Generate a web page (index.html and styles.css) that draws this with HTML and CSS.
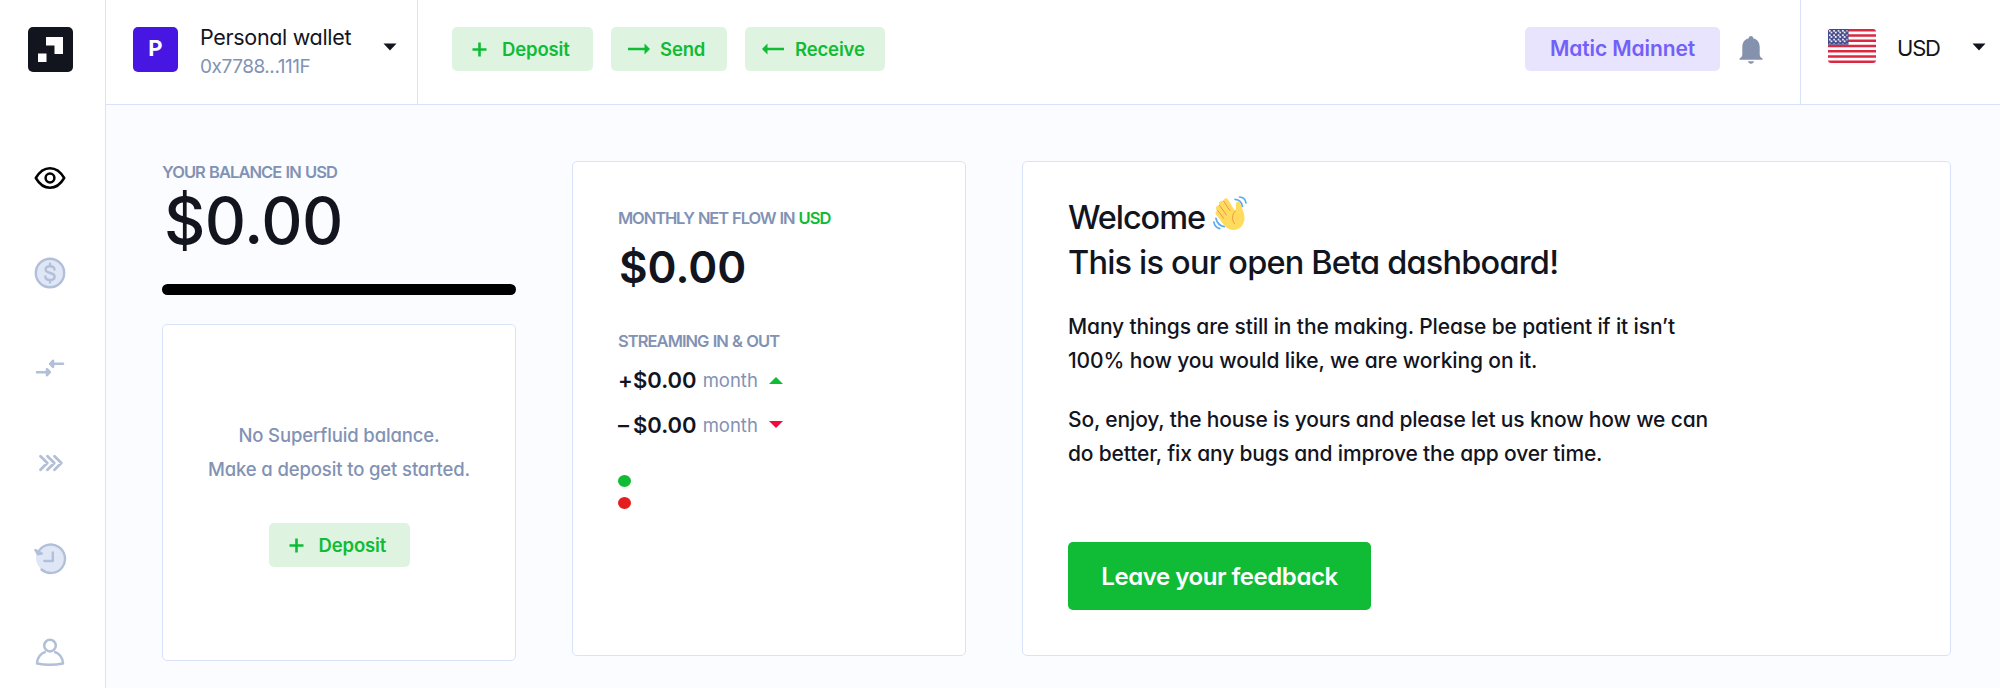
FILE: index.html
```html
<!DOCTYPE html>
<html lang="en">
<head>
    <meta charset="UTF-8">
    <meta name="viewport" content="width=device-width, initial-scale=1.0">
    <title>Dashboard</title>
    <link rel="stylesheet" href="styles.css">
</head>
<body>
    <!-- Sidebar navigation -->
    <nav class="sidebar">
        <a class="logo" href="#">
            <svg width="45" height="45" viewBox="0 0 45 45">
                <rect width="45" height="45" rx="5" fill="#12141e"/>
                <path d="M18 10h17v17h-8.500v-8.500H18zM10 26.500h8.500V35H10z" fill="#fff"/>
            </svg>
        </a>
        <a class="nav-item" href="#">
            <svg width="34" height="34" viewBox="0 0 34 34" fill="none" stroke="#000" stroke-width="2.500">
                <path d="M2.800 17C6 11.500 11 7.200 17 7.200S28 11.500 31.200 17C28 22.500 23 26.800 17 26.800S6 22.500 2.800 17z" stroke-linejoin="round"/>
                <circle cx="17" cy="17" r="4.400"/>
            </svg>
        </a>
        <a class="nav-item" href="#">
            <svg width="34" height="34" viewBox="0 0 34 34" fill="none" stroke="#b2bfd9" stroke-width="2.400">
                <circle cx="17" cy="17" r="14.200" fill="#dfe7f6"/>
                <path d="M21.500 13.500c-.3-2.300-2-3.300-4.500-3.300s-4.400 1.200-4.400 3.300c0 4.700 9 2.300 9 7 0 2.200-2 3.500-4.600 3.500s-4.500-1.300-4.700-3.600M17 7.800v2.400M17 24v2.400" stroke-linecap="round"/>
            </svg>
        </a>
        <a class="nav-item" href="#">
            <svg width="34" height="34" viewBox="0 0 34 34" fill="#b2bfd9" stroke="#b2bfd9" stroke-width="2.600" stroke-linecap="round" stroke-linejoin="round">
                <path d="M4 21.200h10M30 12.800H20"/>
                <path d="M14 18.200l2.800 3-2.800 3zM20 9.800l-2.800 3 2.800 3z"/>
            </svg>
        </a>
        <a class="nav-item" href="#">
            <svg width="34" height="34" viewBox="0 0 34 34" fill="none" stroke="#b2bfd9" stroke-width="2.800" stroke-linecap="round" stroke-linejoin="round">
                <path d="M7.500 10.300l6.800 6.700-6.800 6.700M14.500 10.300l6.800 6.700-6.800 6.700M21.500 10.300l6.800 6.700-6.800 6.700"/>
            </svg>
        </a>
        <a class="nav-item" href="#">
            <svg width="34" height="34" viewBox="0 0 34 34" fill="none" stroke="#b2bfd9" stroke-width="2.400" stroke-linecap="round" stroke-linejoin="round">
                <circle cx="17" cy="17" r="14" fill="#dfe7f6" stroke="none"/>
                <path d="M5.600 10.500A14.200 14.200 0 1 1 8.500 28.500M19.800 11.500v8.500h-8.500"/>
                <path d="M2.400 9l6.400 3.600-4 .6z" fill="#b2bfd9"/>
            </svg>
        </a>
        <a class="nav-item" href="#">
            <svg width="34" height="34" viewBox="0 0 34 34" fill="none" stroke="#b2bfd9" stroke-width="2.500" stroke-linejoin="round">
                <circle cx="17" cy="10.600" r="5.800"/>
                <path d="M12.800 16.800C8 18 4.200 22.500 4 28.500c8 1.500 18 1.500 26 0-.2-6-4-10.500-8.800-11.700"/>
            </svg>
        </a>
    </nav>

    <div class="page">
        <!-- Top bar -->
        <header class="topbar">
            <div class="wallet">
                <div class="avatar">P</div>
                <div class="wallet-info">
                    <div class="wallet-name">Personal wallet</div>
                    <div class="wallet-address">0x7788...111F</div>
                </div>
                <svg class="wallet-caret" width="14" height="8" viewBox="0 0 14 8"><path d="M.5.500h13L7 7.500z" fill="#12141e"/></svg>
            </div>
            <div class="actions">
                <button class="action deposit">
                    <svg width="15" height="15" viewBox="0 0 15 15"><path d="M7.500.500v14M.500 7.500h14" stroke="#10bb35" stroke-width="2.600"/></svg>
                    Deposit
                </button>
                <button class="action send">
                    <svg width="22" height="12" viewBox="0 0 22 12"><path d="M0 6h18" stroke="#10bb35" stroke-width="2.500"/><path d="M16.500.500L22 6l-5.500 5.500z" fill="#10bb35"/></svg>
                    Send
                </button>
                <button class="action receive">
                    <svg width="22" height="12" viewBox="0 0 22 12"><path d="M4 6h18" stroke="#10bb35" stroke-width="2.500"/><path d="M5.500.500L0 6l5.500 5.500z" fill="#10bb35"/></svg>
                    Receive
                </button>
            </div>
            <div class="network">Matic Mainnet</div>
            <svg class="bell" width="24" height="28" viewBox="0 0 24 28" fill="#8492ae">
                <path d="M12 0c1.300 0 2.100.900 2.200 2.200 4.300 1.100 6.500 4.400 6.500 8.800v7.500c0 2 1.200 3.200 2.800 4v1.200H.5v-1.200c1.600-.8 2.800-2 2.800-4V11c0-4.400 2.200-7.700 6.500-8.800C9.900.900 10.700 0 12 0zM9 25.200h6c-.3 1.500-1.400 2.500-3 2.500s-2.700-1-3-2.500z"/>
            </svg>
            <div class="currency">
                <svg width="48" height="34" viewBox="0 0 48 34">
                    <defs>
                        <clipPath id="flag"><rect width="48" height="34" rx="3"/></clipPath>
                        <pattern id="stars" width="4.400" height="4.400" patternUnits="userSpaceOnUse">
                            <circle cx="1.700" cy="1.800" r="1" fill="#fff"/>
                            <circle cx="3.400" cy="3.600" r="1" fill="#fff"/>
                        </pattern>
                    </defs>
                    <g clip-path="url(#flag)">
                        <rect width="48" height="34" fill="#fff"/>
                        <path d="M0 1.300h48M0 6.500h48M0 11.800h48M0 17h48M0 22.200h48M0 27.500h48M0 32.700h48" stroke="#dc2840" stroke-width="2.600"/>
                        <rect width="20.500" height="15.700" fill="#444a8b"/>
                        <rect x="1" y="1" width="18.500" height="13.500" fill="url(#stars)"/>
                    </g>
                </svg>
                <div class="currency-name">USD</div>
                <svg class="currency-caret" width="14" height="8" viewBox="0 0 14 8"><path d="M.5.500h13L7 7.500z" fill="#12141e"/></svg>
            </div>
        </header>

        <main class="content">
            <!-- Balance -->
            <section class="balance">
                <div class="label">YOUR BALANCE IN USD</div>
                <div class="balance-amount">$0.00</div>
                <div class="balance-bar"></div>
                <div class="card empty">
                    <p>No Superfluid balance.<br>Make a deposit to get started.</p>
                    <button class="action deposit">
                        <svg width="15" height="15" viewBox="0 0 15 15"><path d="M7.500.500v14M.500 7.500h14" stroke="#10bb35" stroke-width="2.600"/></svg>
                        Deposit
                    </button>
                </div>
            </section>

            <!-- Net flow -->
            <section class="card flow">
                <div class="label flow-label">MONTHLY NET FLOW IN <span class="flow-currency">USD</span></div>
                <div class="flow-amount">$0.00</div>
                <div class="label stream-label">STREAMING IN &amp; OUT</div>
                <div class="stream">
                    <span class="sign">+</span>
                    <span>$0.00</span>
                    <span class="month">month</span>
                    <svg width="14" height="7" viewBox="0 0 14 7"><path d="M0 7h14L7 0z" fill="#10bb35"/></svg>
                </div>
                <div class="stream">
                    <span class="sign">–</span>
                    <span>$0.00</span>
                    <span class="month">month</span>
                    <svg width="14" height="7" viewBox="0 0 14 7"><path d="M0 0h14L7 7z" fill="#f5093a"/></svg>
                </div>
                <div class="dots">
                    <i class="dot dot-in"></i>
                    <i class="dot dot-out"></i>
                </div>
            </section>

            <!-- Welcome message -->
            <section class="card welcome">
                <h1><span class="greeting">Welcome</span>
                    <svg class="wave" width="34" height="34" viewBox="0 0 34 34" fill="none" stroke-linecap="round">
                        <path d="M13 5l6 10M8.500 7.500l7 11M5.500 12l7 10M5 17l7 9" stroke="#ffdb5e" stroke-width="5"/>
                        <path d="M16 10l6.500 4.500c1.500-3-.5-6.500 1-8.200 1.500-1.500 3.700-.3 4.200 2 .7 3.500 3.800 8 3.800 13.200C31.500 28.500 27 34 20.500 34 15 34 11.500 30 8 25z" fill="#ffdb5e"/>
                        <path d="M10.500 5l6.300 9.500M6.500 9.300l7 9.700M4.300 14l6.500 8.500M22.300 15c-3.200 3.300-3.800 8-1 12.500" stroke="#ee9547" stroke-width="1"/>
                        <path d="M22 3.300c3.800.2 6.800 3 7.500 7.200M26.500 1c3.500.2 6 2.500 6.500 6M2.900 22.300c1.100 4.700 4 7.700 8.400 8.400M.8 26c.7 3.700 2.800 6 5.900 6.700" stroke="#5dadec" stroke-width="1.700"/>
                    </svg>
                    <br>This is our open Beta dashboard!</h1>
                <p>Many things are still in the making. Please be patient if it isn’t<br>100% how you would like, we are working on it.</p>
                <p>So, enjoy, the house is yours and please let us know how we can<br>do better, fix any bugs and improve the app over time.</p>
                <button class="feedback">Leave your feedback</button>
            </section>
        </main>
    </div>
</body>
</html>
```
FILE: styles.css
```css
* {
    box-sizing: border-box;
}

body {
    margin: 0;
    display: flex;
    height: 688px;
    overflow: hidden;
    font-family: Inter, Roboto, sans-serif;
    font-feature-settings: "cv11";
    color: #12141e;
    background-color: #fbfcff;
}

svg {
    display: block;
    flex: none;
}

button {
    border: none;
    font-family: inherit;
    font-feature-settings: inherit;
    cursor: pointer;
}

/* Sidebar */
.sidebar {
    width: 106px;
    flex: none;
    background-color: #fff;
    border-right: 1px solid #d8e2f9;
}

.logo {
    display: block;
    padding: 27px 0 0 28px;
    height: 130.5px;
}

.nav-item {
    display: flex;
    height: 94.9px;
    padding-left: 33px;
    align-items: center;
}

.page {
    flex: 1;
    min-width: 0;
}

/* Top bar */
.topbar {
    display: flex;
    height: 105px;
    background-color: #fff;
    border-bottom: 1px solid #d8e2f9;
}

.wallet {
    display: flex;
    width: 312px;
    padding-left: 27px;
    border-right: 1px solid #d8e2f9;
}

.avatar {
    width: 45px;
    height: 45px;
    margin-top: 27px;
    border-radius: 5px;
    background-color: #4816e2;
    color: #fff;
    font-size: 22px;
    font-weight: 700;
    line-height: 43px;
    text-align: center;
}

.wallet-info {
    width: 205px;
    padding: 23px 0 0 22px;
    line-height: 29px;
}

.wallet-name {
    font-size: 21.5px;
    letter-spacing: -0.32px;
}

.wallet-address {
    font-size: 19px;
    letter-spacing: -0.45px;
    color: #8292b4;
}

.wallet-caret {
    margin-top: 43px;
}

.actions {
    display: flex;
    gap: 18px;
    padding: 27px 0 0 34px;
}

.action {
    display: flex;
    align-items: center;
    height: 44px;
    padding: 0;
    border-radius: 5px;
    background-color: #dff4e0;
    color: #10bb35;
    font-size: 18.5px;
    font-weight: 600;
    letter-spacing: -0.15px;
}

.deposit {
    width: 141px;
    padding-left: 20px;
    gap: 15px;
}

.send {
    width: 116px;
    padding-left: 17px;
    gap: 10px;
}

.receive {
    width: 140px;
    padding-left: 17px;
    gap: 11px;
}

.network {
    width: 195px;
    height: 44px;
    margin: 27px 0 0 auto;
    border-radius: 5px;
    background-color: #e9e4fd;
    color: #7360f7;
    font-size: 21px;
    font-weight: 600;
    letter-spacing: -0.1px;
    line-height: 43px;
    text-align: center;
}

.bell {
    margin: 36px 37px 0 19px;
}

.currency {
    display: flex;
    width: 200px;
    padding: 29px 0 0 27px;
    border-left: 1px solid #d8e2f9;
}

.currency-name {
    width: 96px;
    padding-left: 21px;
    font-size: 22px;
    letter-spacing: -1.2px;
    line-height: 38px;
}

.currency-caret {
    margin-top: 14px;
}

/* Content */
.content {
    display: flex;
    gap: 56px;
    padding: 56px 49px 0 56px;
    align-items: flex-start;
}

.card {
    background-color: #fff;
    border: 1px solid #d8e2f9;
    border-radius: 5px;
}

.label {
    color: #8292b4;
    font-size: 16.5px;
    font-weight: 600;
    letter-spacing: -0.95px;
    line-height: 22px;
    word-spacing: 1px;
}

.balance {
    width: 354px;
}

.balance-amount {
    padding-left: 2px;
    font-size: 64px;
    font-weight: 500;
    letter-spacing: -0.5px;
    line-height: 76px;
}

.balance-bar {
    height: 11px;
    margin: 25px 0 29px;
    border-radius: 6px;
    background-color: #000;
}

.empty {
    display: flex;
    flex-direction: column;
    align-items: center;
    height: 337px;
    padding-top: 94px;
}

.empty p {
    margin: 0 0 37px;
    color: #8292b4;
    font-size: 18.5px;
    font-weight: 500;
    letter-spacing: -0.13px;
    line-height: 33.5px;
    text-align: center;
}

/* Net flow card */
.flow {
    width: 394px;
    height: 495px;
    padding: 45px;
}

.flow-label {
    letter-spacing: -1.1px;
}

.flow-currency {
    color: #10bb35;
    letter-spacing: -0.9px;
}

.flow-amount {
    margin: 13px 0 38px;
    padding-left: 1px;
    font-size: 44px;
    font-weight: 600;
    line-height: 50px;
}

.stream-label {
    margin-bottom: 6px;
}

.stream {
    display: flex;
    align-items: center;
    height: 44.5px;
    font-size: 22px;
    font-weight: 600;
}

.sign {
    width: 15px;
}

.month {
    margin: 0 11px 0 6px;
    color: #8292b4;
    font-size: 18.5px;
    font-weight: 400;
}

.dots {
    margin-top: 28px;
}

.dot {
    display: block;
    width: 13px;
    height: 12px;
    margin-bottom: 10px;
    border-radius: 50%;
}

.dot-in {
    background-color: #10bb35;
}

.dot-out {
    background-color: #e41e1e;
}

/* Welcome card */
.welcome {
    width: 929px;
    height: 495px;
    padding: 33px 45px;
}

.welcome h1 {
    margin: 0 0 25px;
    font-size: 32.5px;
    font-weight: 500;
    letter-spacing: -0.8px;
    line-height: 45px;
}

.greeting {
    letter-spacing: -1.1px;
}

.wave {
    display: inline-block;
    vertical-align: -1px;
}

.welcome p {
    margin: 0 0 26px;
    font-size: 21px;
    font-weight: 500;
    letter-spacing: -0.12px;
    line-height: 33.5px;
}

.welcome p + p {
    letter-spacing: -0.16px;
}

.feedback {
    width: 303px;
    height: 68px;
    margin-top: 46px;
    padding: 0;
    border-radius: 5px;
    background-color: #10bb35;
    color: #fff;
    font-size: 24px;
    font-weight: 600;
    letter-spacing: -0.45px;
}
```
